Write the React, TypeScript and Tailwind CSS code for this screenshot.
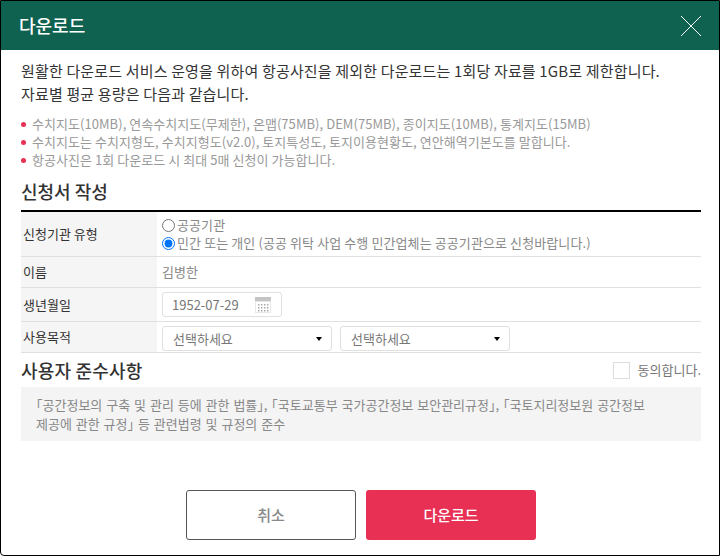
const font = "font-['Noto_Sans_CJK_KR','Noto_Sans',sans-serif]";

function Row({ label, className, children }: { label: string; className: string; children: React.ReactNode }) {
  return (
    <div className={`flex border-b border-[#e0e0e0] ${className}`}>
      <div className="flex w-[136px] shrink-0 items-center bg-[#f5f5f5] pl-[2px] text-[13px] text-[#333]">{label}</div>
      <div className="flex flex-1 items-center pl-[5px] text-[13px] text-[#888]">{children}</div>
    </div>
  );
}

function Select() {
  return (
    <div className="flex h-[25px] w-[170px] items-center justify-between rounded-[3px] border border-[#e0e0e0] pl-[10px] pr-[9px] text-[13px] text-[#777]">
      <span>선택하세요</span>
      <span className="h-0 w-0 border-x-[3.5px] border-t-[4px] border-x-transparent border-t-black" />
    </div>
  );
}

function CalendarIcon() {
  return (
    <svg width="16" height="16" viewBox="0 0 16 16" className="block">
      <rect x="0" y="0" width="16" height="16" fill="#e8e8e8" />
      <rect x="0" y="0" width="16" height="4" fill="#c4c4c4" />
      <rect x="1" y="5" width="14" height="10" fill="#fff" />
      {[3, 6, 9, 12].map((x) =>
        [7, 10, 13].map((y) => <rect key={`${x}-${y}`} x={x} y={y} width="1.5" height="1.5" fill="#aaa" />)
      )}
    </svg>
  );
}

export default function App() {
  return (
    <div className={`flex h-[556px] w-[720px] flex-col overflow-hidden rounded-bl-[4px] border border-black bg-white ${font}`}>
      {/* Header */}
      <div className="flex h-[49px] shrink-0 items-center justify-between bg-[#0f6250] pl-[18px] pr-[18px]">
        <h1 className="text-[18px] font-medium text-white">다운로드</h1>
        <svg width="20" height="20" viewBox="0 0 20 20" className="block">
          <path d="M0 0L20 20M20 0L0 20" stroke="#fff" strokeWidth="1" fill="none" />
        </svg>
      </div>

      <div className="flex flex-1 flex-col pl-[20px] pr-[18px]">
        <p className="mt-[9px] text-[15px] leading-[23px] tracking-[0.16px] text-[#333]">
          원활한 다운로드 서비스 운영을 위하여 항공사진을 제외한 다운로드는 1회당 자료를 1GB로 제한합니다.
          <br />
          자료별 평균 용량은 다음과 같습니다.
        </p>

        <ul className="mt-[10px] text-[13px] leading-[18px] tracking-[0.05px] text-[#999]">
          {[
            "수치지도(10MB), 연속수치지도(무제한), 온맵(75MB), DEM(75MB), 종이지도(10MB), 통계지도(15MB)",
            "수치지도는 수치지형도, 수치지형도(v2.0), 토지특성도, 토지이용현황도, 연안해역기본도를 말합니다.",
            "항공사진은 1회 다운로드 시 최대 5매 신청이 가능합니다.",
          ].map((t) => (
            <li key={t} className="flex items-center">
              <span className="mr-[6px] h-[5px] w-[5px] shrink-0 rounded-full bg-[#e83054]" />
              {t}
            </li>
          ))}
        </ul>

        <h2 className="mt-[8px] mb-[5px] text-[18px] font-medium leading-[28px] text-[#333]">신청서 작성</h2>

        <div className="border-t-2 border-black">
          <Row label="신청기관 유형" className="h-[45px]">
            <div className="flex flex-col text-[13px] leading-[18px] tracking-[0.1px]">
              <label className="flex items-center gap-[2px]">
                <input type="radio" name="org" className="m-0 h-[13px] w-[13px]" />
                <span>공공기관</span>
              </label>
              <label className="flex items-center gap-[2px]">
                <input type="radio" name="org" defaultChecked className="m-0 h-[13px] w-[13px]" />
                <span>민간 또는 개인 (공공 위탁 사업 수행 민간업체는 공공기관으로 신청바랍니다.)</span>
              </label>
            </div>
          </Row>
          <Row label="이름" className="h-[31px]">김병한</Row>
          <Row label="생년월일" className="h-[34px]">
            <div className="flex h-[25px] w-[120px] items-center justify-between rounded-[3px] border border-[#e0e0e0] pl-[9px] pr-[10px] text-[13px] text-[#777]">
              <span>1952-07-29</span>
              <CalendarIcon />
            </div>
          </Row>
          <Row label="사용목적" className="h-[31px]">
            <div className="flex gap-[8px] pt-[3px]">
              <Select />
              <Select />
            </div>
          </Row>
        </div>

        <div className="flex h-[34px] items-center justify-between">
          <h2 className="text-[18px] font-medium tracking-[0.2px] text-[#333]">사용자 준수사항</h2>
          <label className="flex items-center gap-[8px] text-[13px] text-[#777]">
            <span className="h-[17px] w-[17px] border border-[#ddd] bg-white" />
            <span>동의합니다.</span>
          </label>
        </div>

        <div className="h-[54px] bg-[#f4f4f4] px-[15px] py-[8px] text-[13px] leading-[19px] text-[#888] [font-feature-settings:'halt'] [word-spacing:1px]">
          「공간정보의 구축 및 관리 등에 관한 법률」, 「국토교통부 국가공간정보 보안관리규정」, 「국토지리정보원 공간정보
          <br />
          제공에 관한 규정」 등 관련법령 및 규정의 준수
        </div>

        <div className="mt-[49px] flex justify-center gap-[10px]">
          <button className="h-[50px] w-[170px] rounded-[3px] border border-[#555] bg-white text-[15px] font-medium text-[#888]">취소</button>
          <button className="h-[50px] w-[170px] rounded-[3px] bg-[#e83054] text-[15px] font-medium text-white">다운로드</button>
        </div>
      </div>
    </div>
  );
}
